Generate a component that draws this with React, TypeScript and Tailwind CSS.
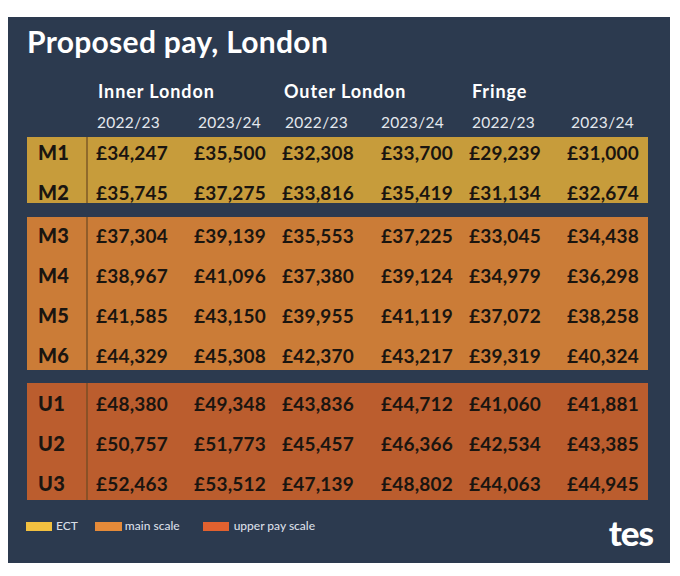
const font = { fontFamily: "Lato, 'Open Sans', sans-serif" };

type Block = {
  bg: string;
  pad: string;
  height: string;
  rows: { label: string; values: string[] }[];
};

const blocks: Block[] = [
  {
    bg: "bg-[#c79c3b]",
    pad: "pt-[2px]",
    height: "h-[66px]",
    rows: [
      { label: "M1", values: ["£34,247", "£35,500", "£32,308", "£33,700", "£29,239", "£31,000"] },
      { label: "M2", values: ["£35,745", "£37,275", "£33,816", "£35,419", "£31,134", "£32,674"] },
    ],
  },
  {
    bg: "bg-[#cb7c37]",
    pad: "pt-[5px]",
    height: "h-[153px]",
    rows: [
      { label: "M3", values: ["£37,304", "£39,139", "£35,553", "£37,225", "£33,045", "£34,438"] },
      { label: "M4", values: ["£38,967", "£41,096", "£37,380", "£39,124", "£34,979", "£36,298"] },
      { label: "M5", values: ["£41,585", "£43,150", "£39,955", "£41,119", "£37,072", "£38,258"] },
      { label: "M6", values: ["£44,329", "£45,308", "£42,370", "£43,217", "£39,319", "£40,324"] },
    ],
  },
  {
    bg: "bg-[#bb5d2e]",
    pad: "pt-[7px]",
    height: "h-[117px]",
    rows: [
      { label: "U1", values: ["£48,380", "£49,348", "£43,836", "£44,712", "£41,060", "£41,881"] },
      { label: "U2", values: ["£50,757", "£51,773", "£45,457", "£46,366", "£42,534", "£43,385"] },
      { label: "U3", values: ["£52,463", "£53,512", "£47,139", "£48,802", "£44,063", "£44,945"] },
    ],
  },
];

const cols = "grid grid-cols-[98px_88px_99px_88px_98px_1fr]";

function PayBlock({ block }: { block: Block }) {
  return (
    <div className={`flex ${block.height} ${block.bg} text-[#1a1510]`}>
      <div className={`w-[61px] shrink-0 border-r-2 border-[#6b4a22]/60 ${block.pad} flex flex-col gap-[14px]`}>
        {block.rows.map((r) => (
          <div key={r.label} className="h-[26px] flex items-center pl-[11px] text-[20px] font-black tracking-[0.3px]">
            {r.label}
          </div>
        ))}
      </div>
      <div className={`flex-1 pl-[8px] ${block.pad} flex flex-col gap-[14px]`}>
        {block.rows.map((r) => (
          <div key={r.label} className={`${cols} h-[26px] items-center text-[19px] font-bold tracking-[0.2px]`}>
            {r.values.map((v, i) => (
              <span key={i}>{v}</span>
            ))}
          </div>
        ))}
      </div>
    </div>
  );
}

export default function App() {
  const years = [
    { t: "2022/23", c: "pl-[1px]" },
    { t: "2023/24", c: "pl-[4px]" },
    { t: "2022/23", c: "pl-[3px]" },
    { t: "2023/24", c: "pl-0" },
    { t: "2022/23", c: "pl-[3px]" },
    { t: "2023/24", c: "pl-[4px]" },
  ];

  return (
    <div className="w-[680px] h-[576px] bg-white pt-[17px] pl-[8px]" style={font}>
      <div className="w-[662px] h-[546px] bg-[#2c3a4f] pl-[19px] pr-[22px] pt-[7px]">
        <h1 className="h-[35px] leading-[35px] text-[30px] font-bold text-white tracking-[0.3px]">
          Proposed pay, London
        </h1>

        <div className="mt-[15px] flex h-[34px] items-center text-[18px] font-bold text-white tracking-[0.9px]">
          <div className="w-[61px] shrink-0" />
          <div className={`flex-1 pl-[8px] ${cols}`}>
            <span className="col-span-2 pl-[2px]">Inner London</span>
            <span className="col-span-2 pl-[2px]">Outer London</span>
            <span className="col-span-2 pl-[3px]">Fringe</span>
          </div>
        </div>

        <div className="mt-px flex h-[28px] items-center text-[15.5px] text-[#e4e8ee] tracking-[0.3px]">
          <div className="w-[61px] shrink-0" />
          <div className={`flex-1 pl-[8px] ${cols}`}>
            {years.map((y, i) => (
              <span key={i} className={y.c}>
                {y.t}
              </span>
            ))}
          </div>
        </div>

        <div className="flex flex-col">
          <PayBlock block={blocks[0]} />
          <div className="h-[14px]" />
          <PayBlock block={blocks[1]} />
          <div className="h-[13px]" />
          <PayBlock block={blocks[2]} />
        </div>

        <div className="mt-[16px] flex items-start justify-between">
          <div className="flex h-[20px] items-center text-[12px] font-medium text-[#d9dee6] -ml-px">
            <span className="w-[26px] h-[9px] bg-[#f2c040]" />
            <span className="ml-[4px]">ECT</span>
            <span className="ml-[17px] w-[27px] h-[9px] bg-[#e58a39]" />
            <span className="ml-[3px]">main scale</span>
            <span className="ml-[23px] w-[26px] h-[9px] bg-[#e2612f]" />
            <span className="ml-[5px]">upper pay scale</span>
          </div>
          <div className="-mr-[5px] mt-[-1px] text-[35px] leading-[34px] font-black text-white tracking-[-1px]">
            tes
          </div>
        </div>
      </div>
    </div>
  );
}
